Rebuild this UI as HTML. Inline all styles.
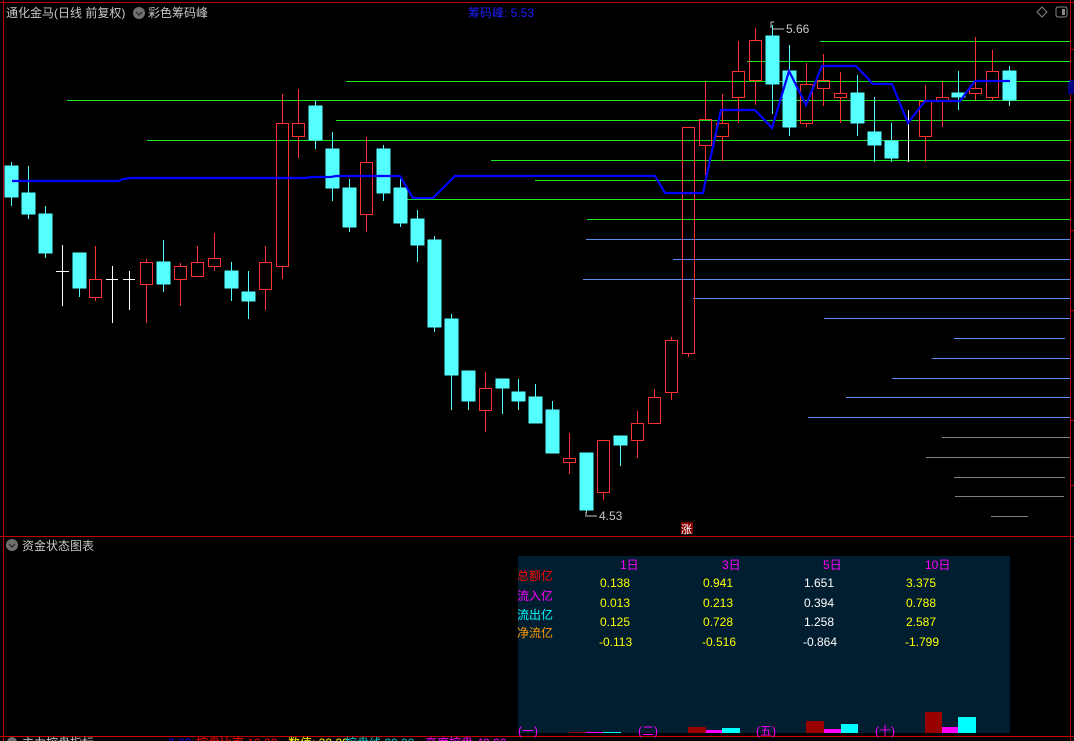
<!DOCTYPE html>
<html><head><meta charset="utf-8"><style>
html,body{margin:0;padding:0;background:#000;width:1074px;height:741px;overflow:hidden}
svg{display:block}
text{font-family:"Liberation Sans","Noto Sans CJK SC",sans-serif;font-size:12px}
</style></head><body>
<svg width="1074" height="741" viewBox="0 0 1074 741" xmlns="http://www.w3.org/2000/svg">
<rect width="1074" height="741" fill="#000"/>
<line x1="3.5" y1="0" x2="3.5" y2="741" stroke="#c00000"/>
<line x1="0" y1="2.5" x2="1074" y2="2.5" stroke="#c00000"/>
<line x1="1070.5" y1="0" x2="1070.5" y2="741" stroke="#c00000"/>
<line x1="0" y1="536.5" x2="1074" y2="536.5" stroke="#c00000"/>
<line x1="0" y1="736.5" x2="1074" y2="736.5" stroke="#c00000"/>
<g stroke="#c00000"><line x1="1070" y1="49.5" x2="1074" y2="49.5"/><line x1="1070" y1="230.5" x2="1074" y2="230.5"/><line x1="1070" y1="310.5" x2="1074" y2="310.5"/><line x1="1070" y1="420.5" x2="1074" y2="420.5"/><line x1="1070" y1="485.5" x2="1074" y2="485.5"/></g>
<rect x="1068" y="80" width="6" height="14" fill="#000080"/>
<text x="6" y="17" fill="#c8c8c8">通化金马(日线 前复权)</text>
<circle cx="139" cy="13" r="6" fill="#707070"/><path d="M136 12 l3 3 l3 -3" stroke="#222" fill="none" stroke-width="1.2"/>
<text x="148" y="17" fill="#c8c8c8">彩色筹码峰</text>
<text x="468" y="17" fill="#1e1eff">筹码峰: 5.53</text>
<path d="M1042 7 l5 5 l-5 5 l-5 -5z" stroke="#888" fill="none"/>
<rect x="1056" y="7" width="11" height="10" rx="2" stroke="#888" fill="none"/><rect x="1062" y="9" width="3" height="6" fill="#888"/>
<g stroke-width="1">
<g stroke="#1ee61e">
<line x1="820" y1="41.5" x2="1070" y2="41.5"/>
<line x1="747" y1="61.5" x2="1070" y2="61.5"/>
<line x1="346" y1="81.5" x2="1070" y2="81.5"/>
<line x1="67" y1="100.5" x2="1070" y2="100.5"/>
<line x1="336" y1="120.5" x2="1070" y2="120.5"/>
<line x1="147" y1="140.5" x2="1070" y2="140.5"/>
<line x1="491" y1="160.5" x2="1070" y2="160.5"/>
<line x1="535" y1="180.5" x2="1070" y2="180.5"/>
<line x1="405" y1="199.5" x2="1070" y2="199.5"/>
<line x1="587" y1="219.5" x2="1070" y2="219.5"/>
</g>
<g stroke="#5a8cf0">
<line x1="586" y1="239.5" x2="1070" y2="239.5"/>
<line x1="673" y1="259.5" x2="1070" y2="259.5"/>
<line x1="583" y1="279.5" x2="1070" y2="279.5"/>
<line x1="693" y1="298.5" x2="1070" y2="298.5"/>
<line x1="824" y1="318.5" x2="1070" y2="318.5"/>
<line x1="954" y1="338.5" x2="1065" y2="338.5"/>
<line x1="932" y1="358.5" x2="1070" y2="358.5"/>
<line x1="892" y1="378.5" x2="1070" y2="378.5"/>
<line x1="846" y1="397.5" x2="1070" y2="397.5"/>
<line x1="808" y1="417.5" x2="1070" y2="417.5"/>
</g>
<g stroke="#808080">
<line x1="942" y1="437.5" x2="1070" y2="437.5"/>
<line x1="926" y1="457.5" x2="1070" y2="457.5"/>
<line x1="954" y1="477.5" x2="1065" y2="477.5"/>
<line x1="955" y1="496.5" x2="1064" y2="496.5"/>
<line x1="991" y1="516.5" x2="1028" y2="516.5"/>
</g>
</g>
<g stroke-width="1">
<g fill="#54ffff" stroke="#54ffff">
<line x1="11.5" y1="162" x2="11.5" y2="206"/><rect x="5" y="166" width="13" height="31"/>
<line x1="28.5" y1="166" x2="28.5" y2="219"/><rect x="22" y="193" width="13" height="21"/>
<line x1="45.5" y1="206" x2="45.5" y2="258"/><rect x="39" y="214" width="13" height="39"/>
<line x1="79.5" y1="253" x2="79.5" y2="297"/><rect x="73" y="253" width="13" height="35"/>
<line x1="163.5" y1="240" x2="163.5" y2="292"/><rect x="157" y="262" width="13" height="22"/>
<line x1="231.5" y1="262" x2="231.5" y2="301"/><rect x="225" y="271" width="13" height="17"/>
<line x1="248.5" y1="271" x2="248.5" y2="319"/><rect x="242" y="292" width="13" height="9"/>
<line x1="315.5" y1="100" x2="315.5" y2="149"/><rect x="309" y="106" width="13" height="34"/>
<line x1="332.5" y1="132" x2="332.5" y2="201"/><rect x="326" y="149" width="13" height="39"/>
<line x1="349.5" y1="179" x2="349.5" y2="232"/><rect x="343" y="188" width="13" height="39"/>
<line x1="383.5" y1="145" x2="383.5" y2="201"/><rect x="377" y="149" width="13" height="44"/>
<line x1="400.5" y1="179" x2="400.5" y2="227"/><rect x="394" y="188" width="13" height="35"/>
<line x1="417.5" y1="210" x2="417.5" y2="262"/><rect x="411" y="219" width="13" height="26"/>
<line x1="434.5" y1="236" x2="434.5" y2="332"/><rect x="428" y="240" width="13" height="87"/>
<line x1="451.5" y1="314" x2="451.5" y2="410"/><rect x="445" y="319" width="13" height="56"/>
<line x1="468.5" y1="371" x2="468.5" y2="410"/><rect x="462" y="371" width="13" height="30"/>
<line x1="502.5" y1="379" x2="502.5" y2="414"/><rect x="496" y="379" width="13" height="9"/>
<line x1="518.5" y1="379" x2="518.5" y2="410"/><rect x="512" y="392" width="13" height="9"/>
<line x1="535.5" y1="384" x2="535.5" y2="423"/><rect x="529" y="397" width="13" height="26"/>
<line x1="552.5" y1="401" x2="552.5" y2="453"/><rect x="546" y="410" width="13" height="43"/>
<line x1="586.5" y1="453" x2="586.5" y2="513"/><rect x="580" y="453" width="13" height="57"/>
<line x1="620.5" y1="436" x2="620.5" y2="466"/><rect x="614" y="436" width="13" height="9"/>
<line x1="772.5" y1="25" x2="772.5" y2="114"/><rect x="766" y="36" width="13" height="48"/>
<line x1="789.5" y1="45" x2="789.5" y2="136"/><rect x="783" y="71" width="13" height="56"/>
<line x1="857.5" y1="75" x2="857.5" y2="136"/><rect x="851" y="93" width="13" height="30"/>
<line x1="874.5" y1="97" x2="874.5" y2="162"/><rect x="868" y="132" width="13" height="13"/>
<line x1="891.5" y1="123" x2="891.5" y2="162"/><rect x="885" y="141" width="13" height="17"/>
<line x1="958.5" y1="71" x2="958.5" y2="110"/><rect x="952" y="93" width="13" height="4"/>
<line x1="1009.5" y1="66" x2="1009.5" y2="106"/><rect x="1003" y="71" width="13" height="29"/>
</g>
<g fill="none" stroke="#ff3232">
<line x1="95.5" y1="246" x2="95.5" y2="279"/><line x1="95.5" y1="297" x2="95.5" y2="301"/><rect x="89.5" y="279.5" width="12" height="18"/>
<line x1="146.5" y1="259" x2="146.5" y2="262"/><line x1="146.5" y1="284" x2="146.5" y2="323"/><rect x="140.5" y="262.5" width="12" height="22"/>
<line x1="180.5" y1="263" x2="180.5" y2="266"/><line x1="180.5" y1="279" x2="180.5" y2="306"/><rect x="174.5" y="266.5" width="12" height="13"/>
<line x1="197.5" y1="246" x2="197.5" y2="262"/><rect x="191.5" y="262.5" width="12" height="14"/>
<line x1="214.5" y1="233" x2="214.5" y2="258"/><line x1="214.5" y1="266" x2="214.5" y2="271"/><rect x="208.5" y="258.5" width="12" height="8"/>
<line x1="265.5" y1="246" x2="265.5" y2="262"/><line x1="265.5" y1="289" x2="265.5" y2="310"/><rect x="259.5" y="262.5" width="12" height="27"/>
<line x1="282.5" y1="94" x2="282.5" y2="123"/><line x1="282.5" y1="266" x2="282.5" y2="279"/><rect x="276.5" y="123.5" width="12" height="143"/>
<line x1="298.5" y1="89" x2="298.5" y2="123"/><line x1="298.5" y1="136" x2="298.5" y2="158"/><rect x="292.5" y="123.5" width="12" height="13"/>
<line x1="366.5" y1="137" x2="366.5" y2="162"/><line x1="366.5" y1="214" x2="366.5" y2="232"/><rect x="360.5" y="162.5" width="12" height="52"/>
<line x1="485.5" y1="372" x2="485.5" y2="388"/><line x1="485.5" y1="410" x2="485.5" y2="432"/><rect x="479.5" y="388.5" width="12" height="22"/>
<line x1="569.5" y1="433" x2="569.5" y2="474"/><rect x="563.5" y="458.5" width="12" height="4" fill="#000"/>
<line x1="603.5" y1="492" x2="603.5" y2="500"/><rect x="597.5" y="440.5" width="12" height="52"/>
<line x1="637.5" y1="411" x2="637.5" y2="423"/><line x1="637.5" y1="440" x2="637.5" y2="458"/><rect x="631.5" y="423.5" width="12" height="17"/>
<line x1="654.5" y1="389" x2="654.5" y2="397"/><rect x="648.5" y="397.5" width="12" height="26"/>
<line x1="671.5" y1="337" x2="671.5" y2="340"/><line x1="671.5" y1="392" x2="671.5" y2="400"/><rect x="665.5" y="340.5" width="12" height="52"/>
<line x1="688.5" y1="353" x2="688.5" y2="357"/><rect x="682.5" y="127.5" width="12" height="226"/>
<line x1="705.5" y1="82" x2="705.5" y2="119"/><line x1="705.5" y1="145" x2="705.5" y2="175"/><rect x="699.5" y="119.5" width="12" height="26"/>
<line x1="722.5" y1="94" x2="722.5" y2="123"/><line x1="722.5" y1="136" x2="722.5" y2="161"/><rect x="716.5" y="123.5" width="12" height="13"/>
<line x1="738.5" y1="41" x2="738.5" y2="71"/><line x1="738.5" y1="97" x2="738.5" y2="123"/><rect x="732.5" y="71.5" width="12" height="26"/>
<line x1="755.5" y1="28" x2="755.5" y2="40"/><line x1="755.5" y1="80" x2="755.5" y2="105"/><rect x="749.5" y="40.5" width="12" height="40"/>
<line x1="806.5" y1="63" x2="806.5" y2="84"/><line x1="806.5" y1="123" x2="806.5" y2="127"/><rect x="800.5" y="84.5" width="12" height="39"/>
<line x1="823.5" y1="54" x2="823.5" y2="80"/><line x1="823.5" y1="88" x2="823.5" y2="106"/><rect x="817.5" y="80.5" width="12" height="8"/>
<line x1="840.5" y1="72" x2="840.5" y2="93"/><line x1="840.5" y1="97" x2="840.5" y2="123"/><rect x="834.5" y="93.5" width="12" height="4"/>
<line x1="925.5" y1="85" x2="925.5" y2="101"/><line x1="925.5" y1="136" x2="925.5" y2="162"/><rect x="919.5" y="101.5" width="12" height="35"/>
<line x1="942.5" y1="82" x2="942.5" y2="97"/><line x1="942.5" y1="101" x2="942.5" y2="127"/><rect x="936.5" y="97.5" width="12" height="4"/>
<line x1="975.5" y1="37" x2="975.5" y2="88"/><line x1="975.5" y1="93" x2="975.5" y2="100"/><rect x="969.5" y="88.5" width="12" height="5"/>
<line x1="992.5" y1="50" x2="992.5" y2="71"/><line x1="992.5" y1="97" x2="992.5" y2="100"/><rect x="986.5" y="71.5" width="12" height="26"/>
</g>
<g stroke="#fff">
<line x1="62.5" y1="245" x2="62.5" y2="306"/><line x1="56" y1="271.5" x2="69" y2="271.5"/>
<line x1="112.5" y1="266" x2="112.5" y2="323"/><line x1="106" y1="279.5" x2="118" y2="279.5"/>
<line x1="129.5" y1="271" x2="129.5" y2="310"/><line x1="123" y1="279.5" x2="135" y2="279.5"/>
<line x1="908.5" y1="110" x2="908.5" y2="162"/>
</g>
</g>
<polyline fill="none" stroke="#0000ff" stroke-width="2.2" points="12,181 118,181 124,179 130,178 306,178 312,177 331,177 336,176 400,176 413,198 433,198 455,176 655,176 665,193 703,193 710,160 721,110 755,110 772,128 789,71 806,105 822,66 856,66 873,84 892,84 908,123 925,101 960,101 975,81 1010,81"/>
<text x="786" y="33" fill="#c8c8c8">5.66</text>
<path d="M771 22 v6 M771 22 h3 M772 29 h12" stroke="#c8c8c8" fill="none"/>
<text x="599" y="520" fill="#c8c8c8">4.53</text>
<path d="M586 512 v5 M587 516 h10" stroke="#c8c8c8" fill="none"/>
<rect x="681" y="522" width="12" height="12" fill="#800000"/>
<text x="681" y="533" fill="#fff" style="font-size:11px">涨</text>
<circle cx="12" cy="545" r="6" fill="#707070"/><path d="M9 544 l3 3 l3 -3" stroke="#222" fill="none" stroke-width="1.2"/>
<text x="22" y="550" fill="#c8c8c8">资金状态图表</text>
<rect x="518" y="556" width="492" height="177" fill="#001e30"/>
<g style="font-size:12px">
<text x="620" y="569" fill="#ff00ff">1日</text>
<text x="722" y="569" fill="#ff00ff">3日</text>
<text x="823" y="569" fill="#ff00ff">5日</text>
<text x="925" y="569" fill="#ff00ff">10日</text>
<text x="517" y="580" fill="#ff0000">总额亿</text>
<text x="517" y="600" fill="#ff00ff">流入亿</text>
<text x="517" y="619" fill="#00ffff">流出亿</text>
<text x="517" y="637" fill="#ff9900">净流亿</text>
<text x="600" y="587" fill="#ffff00">0.138</text>
<text x="703" y="587" fill="#ffff00">0.941</text>
<text x="804" y="587" fill="#ffffff">1.651</text>
<text x="906" y="587" fill="#ffff00">3.375</text>
<text x="600" y="607" fill="#ffff00">0.013</text>
<text x="703" y="607" fill="#ffff00">0.213</text>
<text x="804" y="607" fill="#ffffff">0.394</text>
<text x="906" y="607" fill="#ffff00">0.788</text>
<text x="600" y="626" fill="#ffff00">0.125</text>
<text x="703" y="626" fill="#ffff00">0.728</text>
<text x="804" y="626" fill="#ffffff">1.258</text>
<text x="906" y="626" fill="#ffff00">2.587</text>
<text x="599" y="646" fill="#ffff00">-0.113</text>
<text x="702" y="646" fill="#ffff00">-0.516</text>
<text x="803" y="646" fill="#ffffff">-0.864</text>
<text x="905" y="646" fill="#ffff00">-1.799</text>
<text x="518" y="735" fill="#ff00ff">(一)</text>
<text x="638" y="735" fill="#ff00ff">(二)</text>
<text x="756" y="735" fill="#ff00ff">(五)</text>
<text x="875" y="735" fill="#ff00ff">(十)</text>
</g>
<rect x="569" y="732" width="17" height="1" fill="#900"/>
<rect x="586" y="732" width="17" height="1" fill="#f0f"/>
<rect x="603" y="732" width="18" height="1" fill="#0ff"/>
<rect x="688" y="727" width="18" height="6" fill="#900"/>
<rect x="706" y="730" width="16" height="3" fill="#f0f"/>
<rect x="722" y="728" width="18" height="5" fill="#0ff"/>
<rect x="806" y="721" width="18" height="12" fill="#900"/>
<rect x="824" y="729" width="17" height="4" fill="#f0f"/>
<rect x="841" y="724" width="17" height="9" fill="#0ff"/>
<rect x="925" y="712" width="17" height="21" fill="#900"/>
<rect x="942" y="727" width="16" height="6" fill="#f0f"/>
<rect x="958" y="717" width="18" height="16" fill="#0ff"/>
<circle cx="12" cy="742" r="5" fill="#707070"/>
<text x="22" y="747" fill="#c8c8c8">主力控盘指标</text>
<text x="168" y="747" fill="#0000ff">2.00</text>
<text x="196" y="747" fill="#ff0000">控盘比率 10.00</text>
<text x="288" y="747" fill="#ffff00">数值: 20.20</text>
<text x="345" y="747" fill="#00cccc">控盘线 20.00</text>
<text x="425" y="747" fill="#ff00ff">高度控盘 40.00</text>
</svg>
</body></html>
